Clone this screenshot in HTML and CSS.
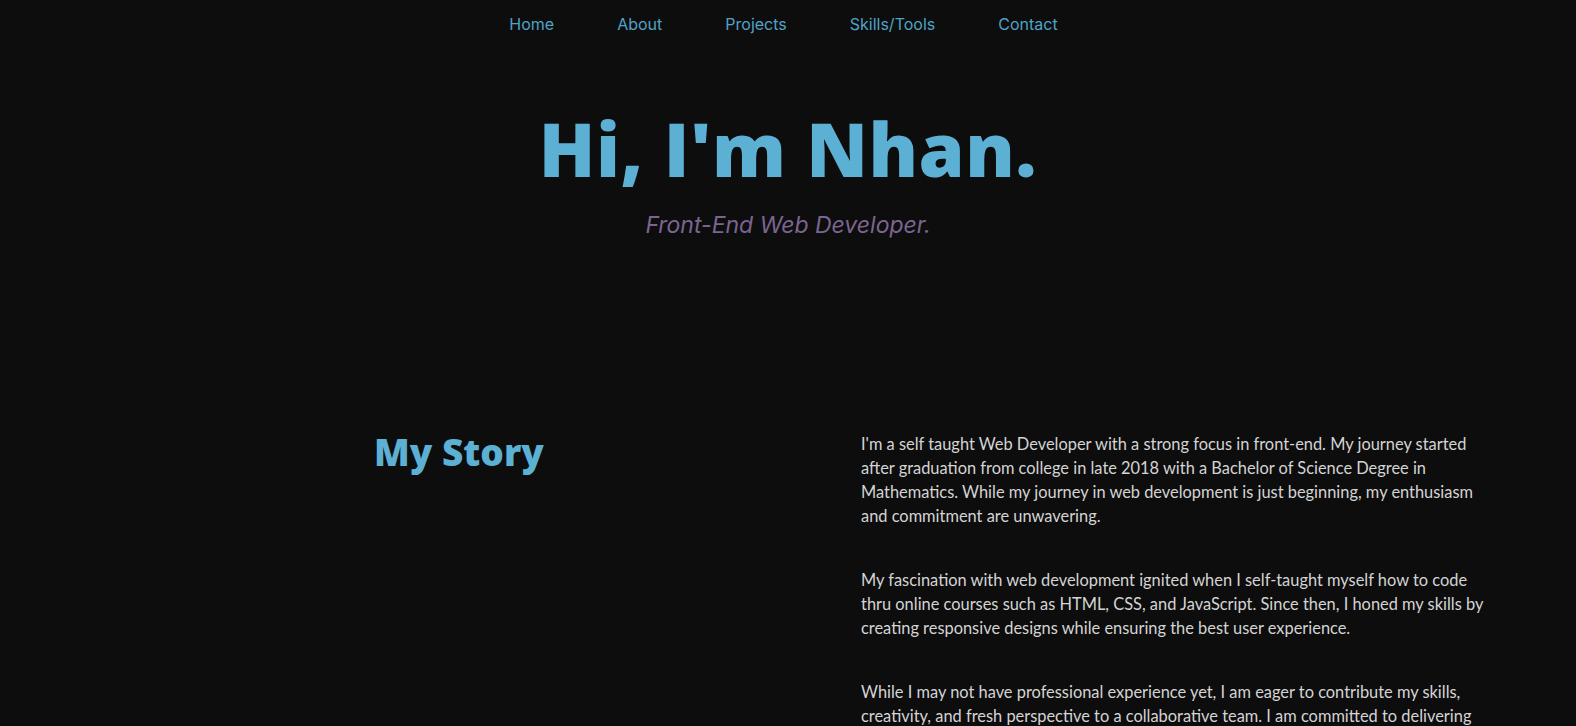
FILE: index.html
```html
<!DOCTYPE html>
<html lang="en">
<head>
<meta charset="utf-8">
<title>Nhan - Front-End Web Developer</title>
<link rel="stylesheet" href="styles.css">
</head>
<body>
<nav class="nav">
  <a href="#home">Home</a>
  <a href="#about">About</a>
  <a href="#projects">Projects</a>
  <a href="#skills">Skills/Tools</a>
  <a href="#contact">Contact</a>
</nav>
<header class="hero" id="home">
  <h1 class="hero-title">Hi, I'm Nhan.</h1>
  <p class="hero-sub">Front-End Web Developer.</p>
</header>
<section class="story" id="about">
  <h2 class="story-title">My Story</h2>
  <div class="story-text">
    <p>I'm a self taught Web Developer with a strong focus in front-end. My journey started after graduation from college in late 2018 with a Bachelor of Science Degree in Mathematics. While my journey in web development is just beginning, my enthusiasm and commitment are unwavering.</p>
    <p>My fascination with web development ignited when I self-taught myself how to code thru online courses such as HTML, CSS, and JavaScript. Since then, I honed my skills by creating responsive designs while ensuring the best user experience.</p>
    <p>While I may not have professional experience yet, I am eager to contribute my skills, creativity, and fresh perspective to a collaborative team. I am committed to delivering high-quality work and continuously learning new technologies to grow as a developer.</p>
  </div>
</section>
</body>
</html>
```
FILE: styles.css
```css
html, body {
  margin: 0;
  padding: 0;
  background: #0d0d0d;
}
body {
  font-family: "Open Sans", "Liberation Sans", sans-serif;
  color: #d4d4d4;
}
.nav {
  display: flex;
  justify-content: center;
  gap: 63px;
  padding-top: 14px;
  padding-right: 9px;
  height: 36px;
  box-sizing: border-box;
}
.nav a {
  font-family: "Inter", "Noto Sans", sans-serif;
  font-size: 16px;
  color: #4fa3c7;
  text-decoration: none;
  line-height: 20px;
}
.hero {
  text-align: center;
  padding-top: 68px;
  height: 356px;
  box-sizing: border-box;
}
.hero-title {
  margin: 0;
  font-family: "Open Sans", sans-serif;
  font-weight: 800;
  font-size: 74px;
  line-height: 90px;
  color: #5cb0d3;
  letter-spacing: 0.5px;
}
.hero-sub {
  margin: 17px 0 0;
  font-family: "Inter", sans-serif;
  font-style: italic;
  font-size: 23px;
  color: #7a6590;
}
.story {
  display: grid;
  grid-template-columns: 487px 624px;
  padding-left: 374px;
}
.story-title {
  margin: 38px 0 0;
  font-family: "Open Sans", sans-serif;
  font-weight: 800;
  font-size: 37px;
  line-height: 44px;
  color: #5cb0d3;
}
.story-text p {
  margin: 40px 0 40px;
  font-family: "Lato", sans-serif;
  font-size: 16.4px;
  line-height: 24px;
}
```
